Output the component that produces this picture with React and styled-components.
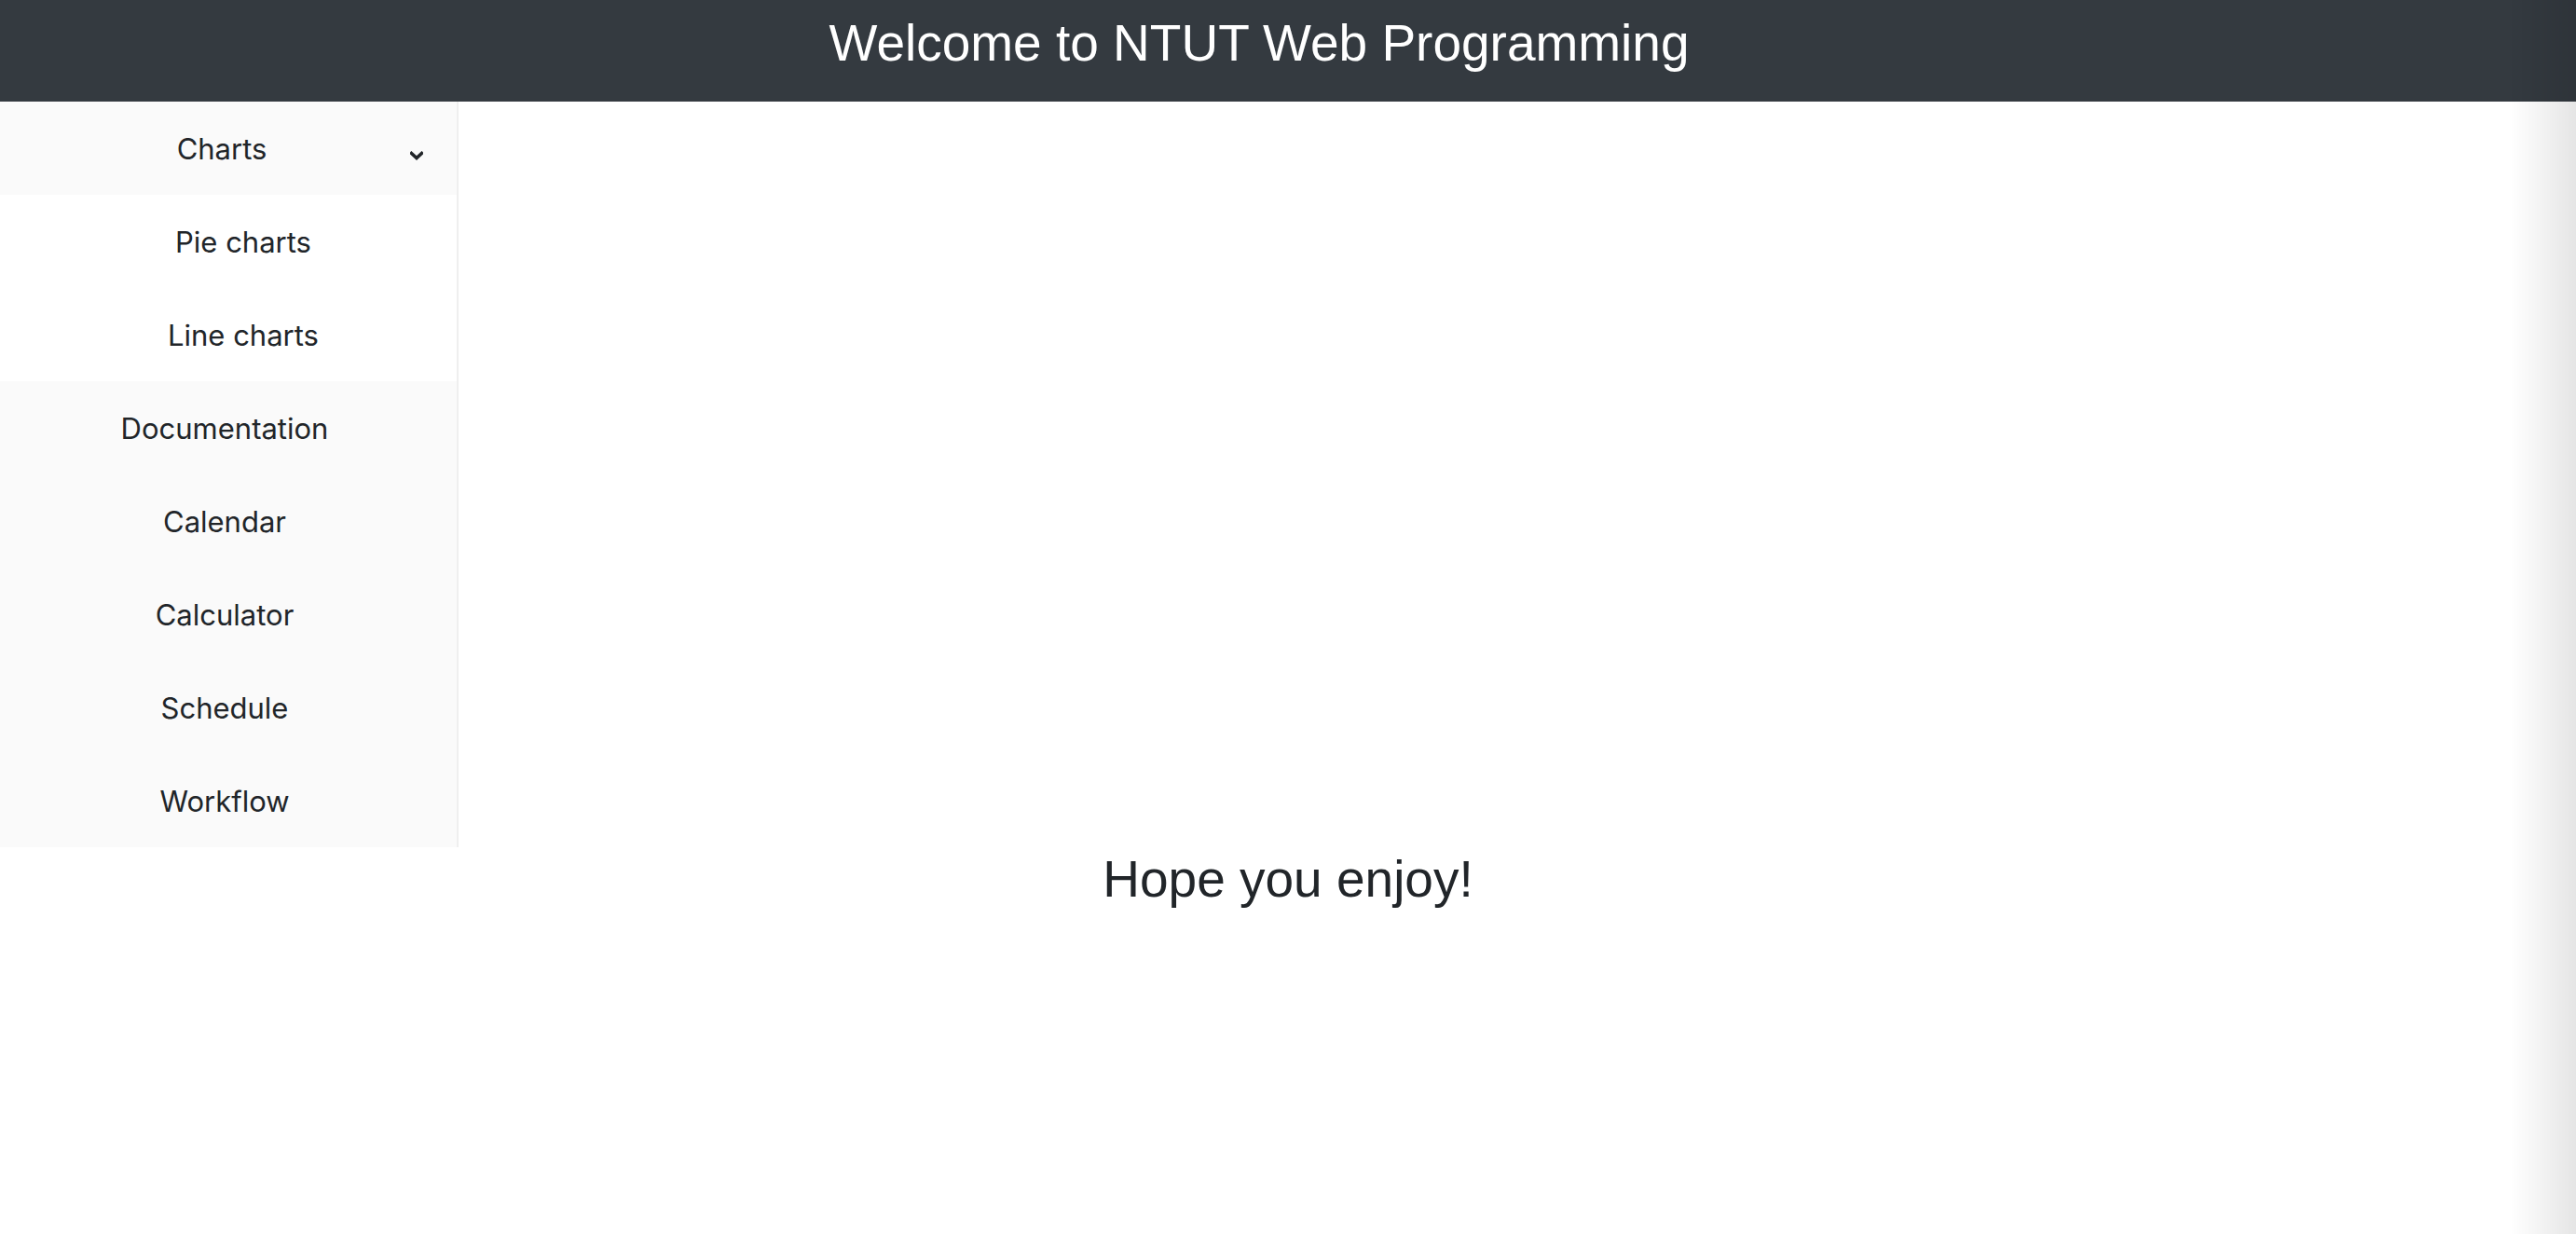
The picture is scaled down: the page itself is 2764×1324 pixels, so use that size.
import React, { useState } from "react"
import styled, { createGlobalStyle } from "styled-components"

const GlobalStyle = createGlobalStyle`
  html, body {
    margin: 0;
    padding: 0;
    background: #fff;
  }
  body {
    font-family: "Liberation Sans", Arial, sans-serif;
    color: #212529;
    min-height: 1324px;
  }
`

const Page = styled.div`
  position: relative;
  min-height: 1324px;
`

const Header = styled.header`
  height: 109px;
  background-color: #343a40;
  color: #fff;
  text-align: center;
  box-sizing: border-box;
  padding: 13px 62px 0 0;
`

const Title = styled.h1`
  margin: 0;
  font-family: "Liberation Sans", Arial, sans-serif;
  font-size: 55px;
  font-weight: 400;
  line-height: 1.2;
`

const Body = styled.div`
  display: flex;
`

const Sidebar = styled.nav`
  width: 490px;
  background: #fafafa;
  border-right: 2px solid #efefef;
  display: flex;
  flex-direction: column;
  font-family: Inter, "Noto Sans", sans-serif;
`

const Item = styled.div`
  height: 100px;
  display: flex;
  align-items: center;
  justify-content: center;
  font-size: 31px;
  color: #212529;
  cursor: pointer;
  background: ${(p) => (p.sub ? "#fff" : "transparent")};
  padding: ${(p) => (p.sub ? "0 0 0 32px" : "0 8px 0 0")};
`

const ToggleRow = styled(Item)`
  justify-content: flex-start;
  padding: 0;
`

const ToggleLabel = styled.span`
  flex: 1;
  text-align: center;
  padding-left: 36px;
`

const Chevron = styled.svg`
  width: 14px;
  height: 10px;
  margin: 16px 36px 0 0;
  transform: ${(p) => (p.open ? "none" : "rotate(-90deg)")};
`

const Main = styled.main`
  flex: 1;
`

const Closing = styled.h2`
  margin: 0;
  padding-top: 3px;
  text-align: center;
  font-family: "Liberation Sans", Arial, sans-serif;
  font-size: 55px;
  font-weight: 400;
  line-height: 1.15;
  color: #212529;
`

const EdgeShade = styled.div`
  position: fixed;
  top: 0;
  right: 0;
  width: 70px;
  height: 100vh;
  pointer-events: none;
  background: linear-gradient(to right, rgba(0, 0, 0, 0), rgba(0, 0, 0, 0.1));
`

const links = ["Documentation", "Calendar", "Calculator", "Schedule", "Workflow"]

export default function App() {
  const [open, setOpen] = useState(true)

  return (
    <Page>
      <GlobalStyle />
      <Header>
        <Title>Welcome to NTUT Web Programming</Title>
      </Header>
      <Body>
        <Sidebar>
          <ToggleRow onClick={() => setOpen(!open)}>
            <ToggleLabel>Charts</ToggleLabel>
            <Chevron open={open} viewBox="0 0 14 10">
              <path d="M1.5 2.5 L7 7.5 L12.5 2.5" fill="none" stroke="#212529" strokeWidth="3.6" strokeLinecap="square" />
            </Chevron>
          </ToggleRow>
          {open && (
            <>
              <Item sub>Pie charts</Item>
              <Item sub>Line charts</Item>
            </>
          )}
          {links.map((l) => (
            <Item key={l}>{l}</Item>
          ))}
        </Sidebar>
        <Main />
      </Body>
      <Closing>Hope you enjoy!</Closing>
      <EdgeShade />
    </Page>
  )
}
